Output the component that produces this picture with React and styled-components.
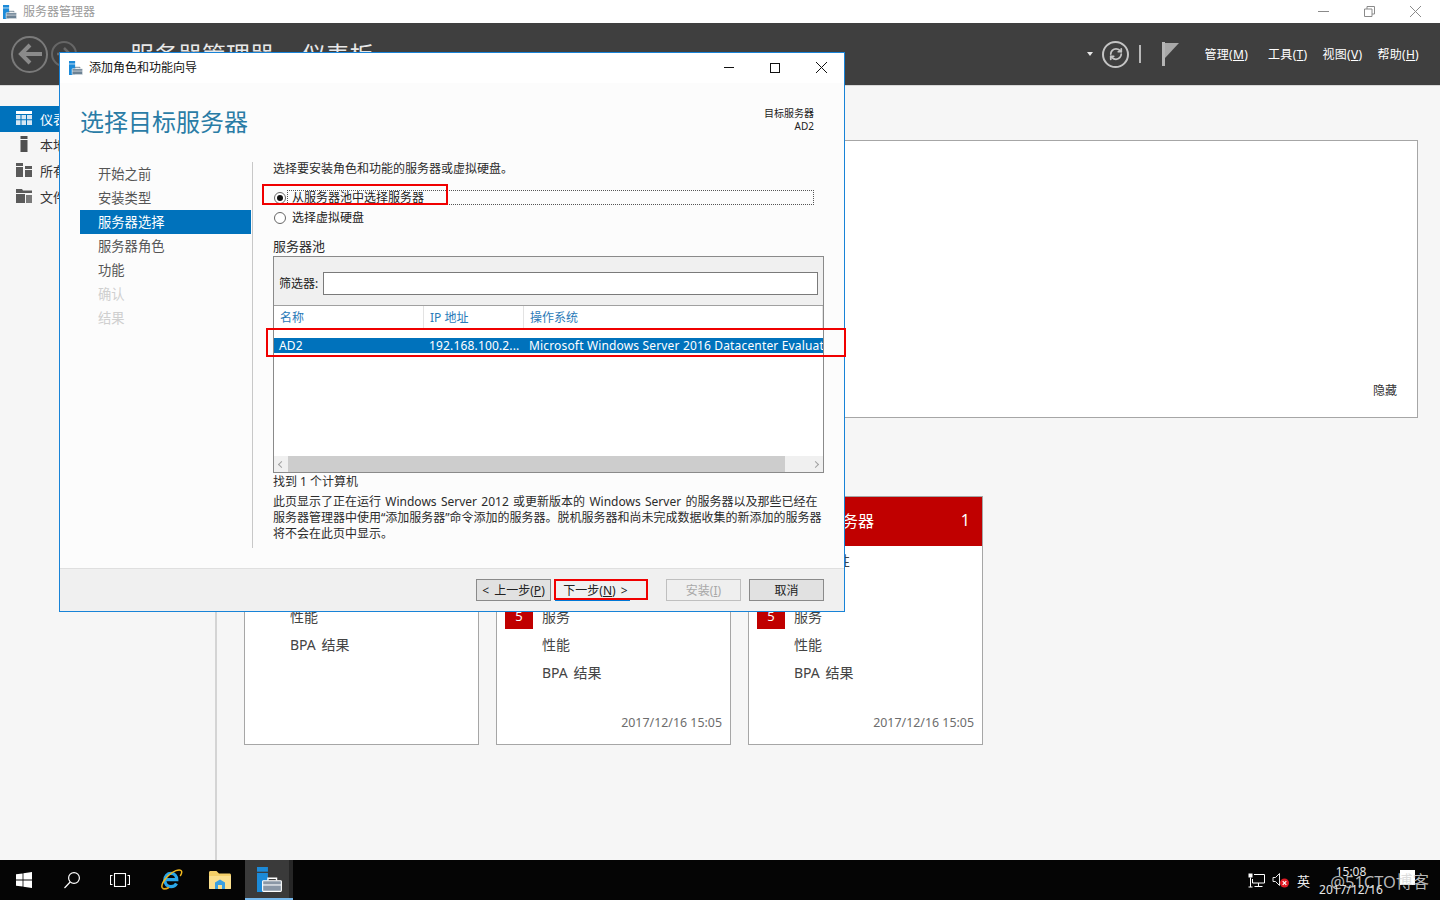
import styled, { createGlobalStyle } from "styled-components";
import { RefreshCw } from "lucide-react";

const Global = createGlobalStyle`
    html, body { margin: 0; padding: 0; height: 100%; }
    body {
        font-family: "Noto Sans", "Noto Sans CJK SC", sans-serif;
        font-size: 12px;
        color: #333;
        background: #f6f6f6;
        overflow: hidden;
    }
    #root { height: 100%; }
    * { box-sizing: border-box; }
`;

const Page = styled.div`
    position: relative;
    width: 1440px;
    height: 900px;
    display: flex;
    flex-direction: column;
    overflow: hidden;
`;

/* window title bar */
const TitleBar = styled.div`
    height: 23px;
    flex: none;
    background: #fff;
    display: flex;
    align-items: center;
    padding-left: 3px;
`;
const AppName = styled.span`
    margin-left: 6px;
    padding-bottom: 2px;
    font-size: 12px;
    color: #9a9a9a;
`;
const WinButtons = styled.div`
    margin-left: auto;
    display: flex;
    align-items: center;
    padding-right: ${(p) => p.$right}px;
`;
const WinButton = styled.div`
    width: 46px;
    height: 23px;
    display: flex;
    align-items: center;
    justify-content: center;
    color: ${(p) => p.$color || "#8a8a8a"};
`;

/* dark header */
const Header = styled.div`
    height: 63px;
    flex: none;
    background: #3f3f3f;
    border-bottom: 1px solid #d8d8d8;
    display: flex;
    align-items: center;
    padding-left: 11px;
    overflow: hidden;
`;
const NavCircle = styled.div`
    width: ${(p) => p.$size}px;
    height: ${(p) => p.$size}px;
    margin-right: 3px;
    border-radius: 50%;
    border: 2px solid ${(p) => p.$color};
    display: flex;
    align-items: center;
    justify-content: center;
    flex: none;
`;
const HeaderTitle = styled.div`
    margin-left: 50px;
    font-size: 24px;
    line-height: 32px;
    margin-top: 2px;
    color: #e8e8e8;
    white-space: nowrap;
`;
const TitleArrow = styled.span`
    margin: 0 10px;
`;
const HeaderTools = styled.div`
    margin-left: auto;
    display: flex;
    align-items: center;
    padding-right: 21px;
`;
const Caret = styled.div`
    width: 0;
    height: 0;
    border-left: 3.5px solid transparent;
    border-right: 3.5px solid transparent;
    border-top: 4px solid #e6e6e6;
    margin-right: 9px;
`;
const RefreshCircle = styled.div`
    width: 27px;
    height: 27px;
    border-radius: 50%;
    border: 2px solid #c4c4c4;
    display: flex;
    align-items: center;
    justify-content: center;
    color: #c4c4c4;
`;
const ToolDivider = styled.div`
    width: 2px;
    height: 18px;
    background: #b8b8b8;
    margin: 0 21px 0 10px;
`;
const Menu = styled.span`
    color: #fff;
    font-size: 12px;
    letter-spacing: 0.3px;
    margin-left: ${(p) => p.$gap}px;
    white-space: nowrap;
    u { text-underline-offset: 1px; }
`;

/* page body */
const Body = styled.div`
    flex: 1;
    display: flex;
    min-height: 0;
`;
const Sidebar = styled.div`
    width: 217px;
    flex: none;
    border-right: 2px solid #d4d4d4;
    padding-top: 20px;
    background: #f6f6f6;
`;
const SideItem = styled.div`
    height: 26px;
    display: flex;
    align-items: center;
    padding: 0 0 2px 16px;
    gap: 8px;
    font-size: 13px;
    color: ${(p) => (p.$active ? "#fff" : "#333")};
    background: ${(p) => (p.$active ? "#0072bc" : "transparent")};
`;
const Main = styled.div`
    flex: 1;
    padding: 54px 22px 0 27px;
`;
const WelcomePanel = styled.div`
    height: 278px;
    background: #fff;
    border: 1px solid #a6a6a6;
    display: flex;
    align-items: flex-end;
    justify-content: flex-end;
    padding: 0 20px 18px 0;
    font-size: 12px;
    color: #333;
`;
const Cards = styled.div`
    display: flex;
    gap: 17px;
    margin-top: 78px;
`;
const Card = styled.div`
    width: 235px;
    height: 249px;
    background: #fff;
    border: 1px solid #a6a6a6;
    display: flex;
    flex-direction: column;
`;
const CardHead = styled.div`
    height: 49px;
    flex: none;
    background: #c00000;
    color: #fff;
    display: flex;
    align-items: center;
    justify-content: space-between;
    padding: 0 12px 3px 45px;
    font-size: 16px;
`;
const CardRows = styled.div`
    display: flex;
    flex-direction: column;
`;
const CardRow = styled.div`
    height: 28px;
    display: flex;
    align-items: center;
    padding-left: 45px;
    position: relative;
    font-size: 14px;
    word-spacing: 2px;
    color: #444;
`;
const Badge = styled.span`
    position: absolute;
    left: 8px;
    top: 1px;
    width: 28px;
    height: 26px;
    background: #c00000;
    color: #fff;
    font-size: 13px;
    display: flex;
    align-items: center;
    justify-content: center;
`;
const CardDate = styled.div`
    margin-top: auto;
    padding: 0 8px 13px 0;
    text-align: right;
    font-size: 12.4px;
    color: #6d6d6d;
`;

/* wizard dialog */
const Wizard = styled.div`
    position: absolute;
    left: 59px;
    top: 52px;
    width: 786px;
    height: 560px;
    background: #fcfcfc;
    border: 1px solid #1883d7;
    display: flex;
    flex-direction: column;
`;
const WizardTitle = styled.div`
    height: 30px;
    flex: none;
    background: #fff;
    display: flex;
    align-items: center;
    padding: 0 0 1px 9px;
    gap: 6px;
    font-size: 12px;
    color: #111;
`;
const WizardTitleText = styled.span`
    padding-bottom: 1px;
`;
const WizardHead = styled.div`
    height: 79px;
    flex: none;
    padding: 23px 30px 0 20px;
    display: flex;
    justify-content: space-between;
`;
const WizardHeading = styled.h1`
    margin: 0;
    font-size: 24px;
    line-height: 32px;
    font-weight: 400;
    color: #2a7ca6;
`;
const TargetInfo = styled.div`
    text-align: right;
    font-size: 10px;
    line-height: 13px;
    color: #222;
    margin-top: 1px;
`;
const WizardBody = styled.div`
    height: 386px;
    flex: none;
    display: flex;
    padding-left: 20px;
`;
const Steps = styled.div`
    width: 173px;
    flex: none;
    border-right: 1px solid #c8c8c8;
    padding-right: 1px;
`;
const Step = styled.div`
    height: 24px;
    padding: 0 0 2px 18px;
    display: flex;
    align-items: center;
    font-size: 13.3px;
    color: ${(p) => (p.$active ? "#fff" : p.$disabled ? "#cfcfcf" : "#555")};
    background: ${(p) => (p.$active ? "#0072bc" : "transparent")};
`;
const Pane = styled.div`
    width: 551px;
    margin-left: 20px;
    display: flex;
    flex-direction: column;
`;
const Line = styled.div`
    font-size: ${(p) => p.$size || 12}px;
    line-height: ${(p) => p.$height || 14}px;
    margin-top: ${(p) => p.$top || 0}px;
    color: #2b2b2b;
    white-space: nowrap;
`;
const NoteText = styled(Line)`
    word-spacing: 1.2px;
`;
const RadioRow = styled.div`
    display: flex;
    align-items: center;
    height: 15px;
    margin-top: ${(p) => p.$top}px;
    padding-left: 1px;
    font-size: 12px;
    color: #222;
`;
const RadioDot = styled.span`
    width: 12px;
    height: 12px;
    margin: 1px 1px 0 0;
    flex: none;
    border-radius: 50%;
    border: 1px solid #666;
    background: #fff;
    display: flex;
    align-items: center;
    justify-content: center;
    &::after {
        content: "";
        width: 6px;
        height: 6px;
        border-radius: 50%;
        background: ${(p) => (p.$checked ? "#111" : "transparent")};
    }
`;
const RadioLabel = styled.span`
    margin-left: ${(p) => (p.$focused ? 0 : 5)}px;
    padding-left: ${(p) => (p.$focused ? 4 : 0)}px;
    width: ${(p) => (p.$focused ? "527px" : "auto")};
    height: 15px;
    border: ${(p) => (p.$focused ? "1px dotted #555" : "none")};
    line-height: ${(p) => (p.$focused ? 14 : 15)}px;
`;
const Pool = styled.div`
    height: 217px;
    margin-top: 3px;
    border: 1px solid #8a8a8a;
    background: #fff;
    display: flex;
    flex-direction: column;
`;
const FilterBar = styled.div`
    height: 49px;
    flex: none;
    padding: 15px 5px 0 5px;
    background: #f0f0f0;
    border-bottom: 1px solid #a0a0a0;
    display: flex;
    align-items: flex-start;
    gap: 5px;
`;
const FilterLabel = styled.span`
    line-height: 23px;
    font-size: 12px;
    color: #222;
`;
const FilterInput = styled.div`
    flex: 1;
    height: 23px;
    background: #fff;
    border: 1px solid #7a7a7a;
`;
const TableHead = styled.div`
    height: 23px;
    flex: none;
    display: grid;
    grid-template-columns: 150px 100px 1fr;
`;
const HeadCell = styled.div`
    padding-left: 6px;
    line-height: 23px;
    font-size: 12px;
    color: #2a7ab8;
    border-right: 1px solid #e3e3e3;
`;
const TableRow = styled.div`
    height: 15px;
    margin-top: 9px;
    flex: none;
    display: grid;
    grid-template-columns: 150px 100px 1fr;
    background: #0072bc;
    color: #fff;
    font-size: 12px;
    line-height: 15px;
    overflow: hidden;
`;
const RowCell = styled.div`
    padding-left: 5px;
    white-space: nowrap;
    overflow: hidden;
    letter-spacing: 0.16px;
`;
const ScrollBar = styled.div`
    margin-top: auto;
    height: 16px;
    flex: none;
    background: #f0f0f0;
    display: flex;
    align-items: center;
    justify-content: space-between;
`;
const ScrollThumb = styled.div`
    width: 497px;
    height: 16px;
    margin-left: -1px;
    margin-right: auto;
    background: #cdcdcd;
`;
const ScrollArrow = styled.span`
    width: 5px;
    height: 5px;
    flex: none;
    border-left: 1px solid #a0a0a0;
    border-bottom: 1px solid #a0a0a0;
    transform: rotate(${(p) => p.$deg}deg);
    margin: 0 5px;
`;
const WizardFooter = styled.div`
    margin-top: auto;
    height: 43px;
    flex: none;
    background: #f0f0f0;
    border-top: 1px solid #dfdfdf;
    padding: 10px 20px 0 0;
    display: flex;
    justify-content: flex-end;
    align-items: flex-start;
`;
const Button = styled.div`
    width: 75px;
    height: 22px;
    margin-left: ${(p) => p.$gap || 0}px;
    padding: ${(p) => (p.$primary ? "1px 0 0 5px" : "0")};
    background: ${(p) => (p.$primary ? "#f0f0f0" : p.$disabled ? "#efefef" : "#e1e1e1")};
    border: 1px solid ${(p) => (p.$primary ? "#0078d7" : p.$disabled ? "#bfbfbf" : "#8a8a8a")};
    border-width: ${(p) => (p.$primary ? "0 0 1px 1px" : "1px")};
    color: ${(p) => (p.$disabled ? "#a8a8a8" : "#222")};
    font-size: 12px;
    word-spacing: 2px;
    line-height: 21px;
    text-align: center;
    white-space: nowrap;
`;

/* red marks drawn on top of the screenshot */
const Highlight = styled.div`
    position: absolute;
    left: ${(p) => p.$x}px;
    top: ${(p) => p.$y}px;
    width: ${(p) => p.$w}px;
    height: ${(p) => p.$h}px;
    border: 2px solid #f00000;
`;

/* taskbar */
const Taskbar = styled.div`
    height: 40px;
    flex: none;
    background: #050505;
    display: flex;
    align-items: stretch;
    position: relative;
`;
const TaskItem = styled.div`
    width: 48px;
    margin-left: ${(p) => p.$gap || 0}px;
    display: flex;
    align-items: center;
    justify-content: center;
    background: ${(p) => (p.$active ? "linear-gradient(90deg, #3a3a3a 44px, #262626 44px)" : "transparent")};
    border-bottom: ${(p) => (p.$active ? "2px solid #76b9ed" : "none")};
`;
const Tray = styled.div`
    margin-left: auto;
    display: flex;
    align-items: center;
    color: #e8e8e8;
    padding-right: 25px;
`;
const TrayGap = styled.span`
    width: 7px;
`;
const TrayLang = styled.span`
    font-size: 13px;
    margin-left: 7px;
    color: #f0f0f0;
`;
const Clock = styled.div`
    width: 84px;
    margin-left: -1px;
    padding-top: 2px;
    text-align: center;
    font-size: 12px;
    line-height: 18px;
    color: #e6e6e6;
`;
const NotifyBox = styled.span`
    width: 15px;
    height: 15px;
    background: #fff;
    flex: none;
    margin-left: 7px;
    margin-top: -6px;
`;
const Watermark = styled.div`
    position: absolute;
    right: 11px;
    top: 11px;
    font-size: 16.5px;
    line-height: 22px;
    color: rgba(215, 215, 215, 0.85);
    white-space: nowrap;
`;

const ManagerIcon = ({ size = 14, light }) => (
    <svg width={size} height={size} viewBox="0 0 16 16">
        <rect x="0" y="0" width="7" height="3" fill="#1c8ad8" />
        <rect x="0" y="3.8" width="7" height="12.2" fill="#1c8ad8" />
        <path d="M7 8.600V7.200h5.500v1.400" fill="none" stroke={light ? "#fff" : "#5c7183"} strokeWidth="0.9" />
        <rect x="3.600" y="8.800" width="12" height="6.800" rx="0.500" fill={light ? "#8a97a6" : "#6c8294"} stroke="#fff" strokeWidth="0.700" />
        <path d="M3.600 11.500h12" stroke="#fff" strokeWidth="0.700" />
    </svg>
);

const GridIcon = () => (
    <svg width="16" height="14" viewBox="0 0 16 14">
        <rect width="16" height="3" fill="#fff" />
        <path d="M0 4h4.500v4.200H0zM5.500 4h4.500v4.200H5.500zM11 4h5v4.200h-5zM0 9.200h4.500V14H0zM5.500 9.200h4.500V14H5.500zM11 9.200h5V14h-5z" fill="#d5e6f3" />
    </svg>
);

const TowerIcon = () => (
    <svg width="16" height="16" viewBox="0 0 16 16">
        <rect x="4.500" y="0" width="7" height="3" fill="#4f4f4f" />
        <rect x="4.500" y="4" width="7" height="12" fill="#4f4f4f" />
    </svg>
);

const ServersIcon = () => (
    <svg width="16" height="16" viewBox="0 0 16 16">
        <path d="M0 1h7v3H0zM0 5h7v10H0zM9 4h7v3H9zM9 8h7v7H9z" fill="#5a5a5a" />
    </svg>
);

const FilesIcon = () => (
    <svg width="16" height="16" viewBox="0 0 16 16">
        <path d="M0 1h6l1 1.500h9V5H0zM0 6h9v9H0z" fill="#5a5a5a" />
        <path d="M10 7h6v8h-6z" fill="#7a7a7a" />
    </svg>
);

const WindowsLogo = () => (
    <svg width="16" height="16" viewBox="0 0 16 16">
        <path d="M0 2.300l6.600-.9v6.200H0zM7.400 1.300L16 0v7.600H7.400zM0 8.400h6.600v6.200L0 13.700zM7.400 8.400H16V16l-8.600-1.200z" fill="#fff" />
    </svg>
);

const SearchIcon = () => (
    <svg width="18" height="18" viewBox="0 0 18 18" fill="none" stroke="#fff" strokeWidth="1.200">
        <circle cx="11" cy="7" r="5.400" />
        <path d="M7.200 11 1.500 17" />
    </svg>
);

const TaskViewIcon = () => (
    <svg width="20" height="14" viewBox="0 0 20 14" fill="none" stroke="#fff" strokeWidth="1.100">
        <rect x="4.500" y="0.500" width="11" height="13" />
        <path d="M2.500 2.500H.5v9h2M17.500 2.500h2v9h-2" />
    </svg>
);

const IeIcon = () => (
    <svg width="24" height="24" viewBox="0 0 24 24" fill="none">
        <path d="M17.500 15.500c-1 2-3 3.200-5.500 3.200-3.600 0-6.200-2.800-6.200-6.600S8.400 5.400 12 5.400s5.800 2.800 5.800 6.300H6.500" stroke="#2aa7ea" strokeWidth="3.200" />
        <path d="M3.500 20c-2-2 1-8 6-12.500S20 .8 22 2.500c1.300 1.100.5 3.500-.8 5.500" stroke="#f2b91f" strokeWidth="1.500" />
        <path d="M3.500 20c1 1.300 3.600 1 6.500-.5" stroke="#e2a516" strokeWidth="1.800" />
    </svg>
);

const FolderIcon = () => (
    <svg width="22" height="18" viewBox="0 0 22 18">
        <path d="M0 1.500C0 .7.600 0 1.500 0h6L10 2.500h10.500c.8 0 1.500.7 1.500 1.500v13a1 1 0 0 1-1 1H1a1 1 0 0 1-1-1z" fill="#f3cf68" />
        <path d="M0 5h22v12a1 1 0 0 1-1 1H1a1 1 0 0 1-1-1z" fill="#fbe08e" />
        <path d="M6 18v-6.500l5-3 5 3V18h-3v-4H9v4z" fill="#3aa0e0" />
    </svg>
);

const NetworkIcon = () => (
    <svg width="17" height="15" viewBox="0 0 17 15" fill="none" stroke="#fff" strokeWidth="1">
        <path d="M6 1.500h10.500v8.500H4.500V6M10.500 10v3.500M6.500 13.500h8" />
        <rect x="0.500" y="0.500" width="4" height="4" fill="#fff" stroke="none" />
        <path d="M2.500 4.500V14M0.500 14h4" />
    </svg>
);

const VolumeIcon = () => (
    <svg width="18" height="16" viewBox="0 0 18 16">
        <path d="M1 5.500h2.500L7.500 1.500v12l-4-4H1z" fill="none" stroke="#e8e8e8" strokeWidth="1" />
        <circle cx="12.500" cy="11" r="4.500" fill="#e01b24" />
        <path d="M10.700 9.200l3.600 3.600M14.300 9.200l-3.600 3.600" stroke="#fff" strokeWidth="1.200" />
    </svg>
);

const App = () => {
    const steps = [
        { label: "开始之前" },
        { label: "安装类型" },
        { label: "服务器选择", active: true },
        { label: "服务器角色" },
        { label: "功能" },
        { label: "确认", disabled: true },
        { label: "结果", disabled: true },
    ];

    return (
        <>
            <Global />
            <Page>
                <TitleBar>
                    <ManagerIcon />
                    <AppName>服务器管理器</AppName>
                    <WinButtons $right={2}>
                        <WinButton>
                            <svg width="11" height="1"><rect width="11" height="1" fill="currentColor" /></svg>
                        </WinButton>
                        <WinButton>
                            <svg width="11" height="11" viewBox="0 0 11 11" fill="none" stroke="currentColor">
                                <path d="M.5 3h7.500v7.500H.5zM3 3V.5h7.500V8H8" />
                            </svg>
                        </WinButton>
                        <WinButton>
                            <svg width="11" height="11" viewBox="0 0 11 11" stroke="currentColor"><path d="M0 0l11 11M11 0 0 11" /></svg>
                        </WinButton>
                    </WinButtons>
                </TitleBar>

                <Header>
                    <NavCircle $size={37} $color="#7a7a7a">
                        <svg width="24" height="22" viewBox="0 0 24 22" fill="none" stroke="#8a8a8a" strokeWidth="4">
                            <path d="M12 2 3 11l9 9M3 11h21" />
                        </svg>
                    </NavCircle>
                    <NavCircle $size={26} $color="#666">
                        <svg width="14" height="14" viewBox="0 0 14 14" fill="none" stroke="#6a6a6a" strokeWidth="2.500">
                            <path d="M7 1l6 6-6 6M13 7H0" />
                        </svg>
                    </NavCircle>
                    <HeaderTitle>服务器管理器<TitleArrow>›</TitleArrow>仪表板</HeaderTitle>
                    <HeaderTools>
                        <Caret />
                        <RefreshCircle>
                            <RefreshCw size={14} strokeWidth={3} />
                        </RefreshCircle>
                        <ToolDivider />
                        <svg width="17" height="24" viewBox="0 0 17 24">
                            <rect x="0" y="0" width="3" height="24" fill="#b5b5b5" />
                            <path d="M3 1h14L3 16z" fill="#a8a8a8" />
                        </svg>
                        <Menu $gap={25}>管理(<u>M</u>)</Menu>
                        <Menu $gap={20}>工具(<u>T</u>)</Menu>
                        <Menu $gap={15}>视图(<u>V</u>)</Menu>
                        <Menu $gap={15}>帮助(<u>H</u>)</Menu>
                    </HeaderTools>
                </Header>

                <Body>
                    <Sidebar>
                        <SideItem $active><GridIcon />仪表板</SideItem>
                        <SideItem><TowerIcon />本地服务器</SideItem>
                        <SideItem><ServersIcon />所有服务器</SideItem>
                        <SideItem><FilesIcon />文件和存储服务</SideItem>
                    </Sidebar>
                    <Main>
                        <WelcomePanel>隐藏</WelcomePanel>
                        <Cards>
                            <Card>
                                <CardHead><span>文件和存储服务</span><span>1</span></CardHead>
                                <CardRows>
                                    <CardRow>可管理性</CardRow>
                                    <CardRow>事件</CardRow>
                                    <CardRow>性能</CardRow>
                                    <CardRow>BPA 结果</CardRow>
                                </CardRows>
                            </Card>
                            <Card>
                                <CardHead><span>本地服务器</span><span>1</span></CardHead>
                                <CardRows>
                                    <CardRow>可管理性</CardRow>
                                    <CardRow>事件</CardRow>
                                    <CardRow><Badge>5</Badge>服务</CardRow>
                                    <CardRow>性能</CardRow>
                                    <CardRow>BPA 结果</CardRow>
                                </CardRows>
                                <CardDate>2017/12/16 15:05</CardDate>
                            </Card>
                            <Card>
                                <CardHead><span>所有服务器</span><span>1</span></CardHead>
                                <CardRows>
                                    <CardRow>可管理性</CardRow>
                                    <CardRow>事件</CardRow>
                                    <CardRow><Badge>5</Badge>服务</CardRow>
                                    <CardRow>性能</CardRow>
                                    <CardRow>BPA 结果</CardRow>
                                </CardRows>
                                <CardDate>2017/12/16 15:05</CardDate>
                            </Card>
                        </Cards>
                    </Main>
                </Body>

                <Taskbar>
                    <TaskItem><WindowsLogo /></TaskItem>
                    <TaskItem><SearchIcon /></TaskItem>
                    <TaskItem><TaskViewIcon /></TaskItem>
                    <TaskItem $gap={3}><IeIcon /></TaskItem>
                    <TaskItem $gap={1}><FolderIcon /></TaskItem>
                    <TaskItem $gap={1} $active><ManagerIcon size={25} light /></TaskItem>
                    <Tray>
                        <NetworkIcon />
                        <TrayGap />
                        <VolumeIcon />
                        <TrayLang>英</TrayLang>
                        <Clock>15:08<br />2017/12/16</Clock>
                        <NotifyBox />
                    </Tray>
                    <Watermark>@51CTO博客</Watermark>
                </Taskbar>

                <Wizard>
                    <WizardTitle>
                        <ManagerIcon />
                        <WizardTitleText>添加角色和功能向导</WizardTitleText>
                        <WinButtons $right={0}>
                            <WinButton $color="#111">
                                <svg width="10" height="1"><rect width="10" height="1" fill="currentColor" /></svg>
                            </WinButton>
                            <WinButton $color="#111">
                                <svg width="10" height="10" viewBox="0 0 10 10" fill="none" stroke="currentColor"><rect x=".5" y=".5" width="9" height="9" /></svg>
                            </WinButton>
                            <WinButton $color="#111">
                                <svg width="11" height="11" viewBox="0 0 11 11" stroke="currentColor"><path d="M0 0l11 11M11 0 0 11" /></svg>
                            </WinButton>
                        </WinButtons>
                    </WizardTitle>
                    <WizardHead>
                        <WizardHeading>选择目标服务器</WizardHeading>
                        <TargetInfo>目标服务器<br />AD2</TargetInfo>
                    </WizardHead>
                    <WizardBody>
                        <Steps>
                            {steps.map((s) => (
                                <Step key={s.label} $active={s.active} $disabled={s.disabled}>{s.label}</Step>
                            ))}
                        </Steps>
                        <Pane>
                            <Line>选择要安装角色和功能的服务器或虚拟硬盘。</Line>
                            <RadioRow $top={14}>
                                <RadioDot $checked />
                                <RadioLabel $focused>从服务器池中选择服务器</RadioLabel>
                            </RadioRow>
                            <RadioRow $top={5}>
                                <RadioDot />
                                <RadioLabel>选择虚拟硬盘</RadioLabel>
                            </RadioRow>
                            <Line $size={13} $top={14}>服务器池</Line>
                            <Pool>
                                <FilterBar>
                                    <FilterLabel>筛选器:</FilterLabel>
                                    <FilterInput />
                                </FilterBar>
                                <TableHead>
                                    <HeadCell>名称</HeadCell>
                                    <HeadCell>IP 地址</HeadCell>
                                    <HeadCell>操作系统</HeadCell>
                                </TableHead>
                                <TableRow>
                                    <RowCell>AD2</RowCell>
                                    <RowCell>192.168.100.2...</RowCell>
                                    <RowCell>Microsoft Windows Server 2016 Datacenter Evaluat</RowCell>
                                </TableRow>
                                <ScrollBar>
                                    <ScrollArrow $deg={45} />
                                    <ScrollThumb />
                                    <ScrollArrow $deg={225} />
                                </ScrollBar>
                            </Pool>
                            <Line $top={2}>找到 1 个计算机</Line>
                            <NoteText $top={5} $height={16}>
                                此页显示了正在运行 Windows Server 2012 或更新版本的 Windows Server 的服务器以及那些已经在<br />
                                服务器管理器中使用“添加服务器”命令添加的服务器。脱机服务器和尚未完成数据收集的新添加的服务器<br />
                                将不会在此页中显示。
                            </NoteText>
                        </Pane>
                    </WizardBody>
                    <WizardFooter>
                        <Button>&lt; 上一步(<u>P</u>)</Button>
                        <Button $gap={4} $primary>下一步(<u>N</u>) &gt;</Button>
                        <Button $gap={36} $disabled>安装(<u>I</u>)</Button>
                        <Button $gap={8}>取消</Button>
                    </WizardFooter>
                </Wizard>

                <Highlight $x={262} $y={184} $w={186} $h={21} />
                <Highlight $x={266} $y={328} $w={580} $h={29} />
                <Highlight $x={554} $y={579} $w={94} $h={21} />
            </Page>
        </>
    );
};

export default App;
